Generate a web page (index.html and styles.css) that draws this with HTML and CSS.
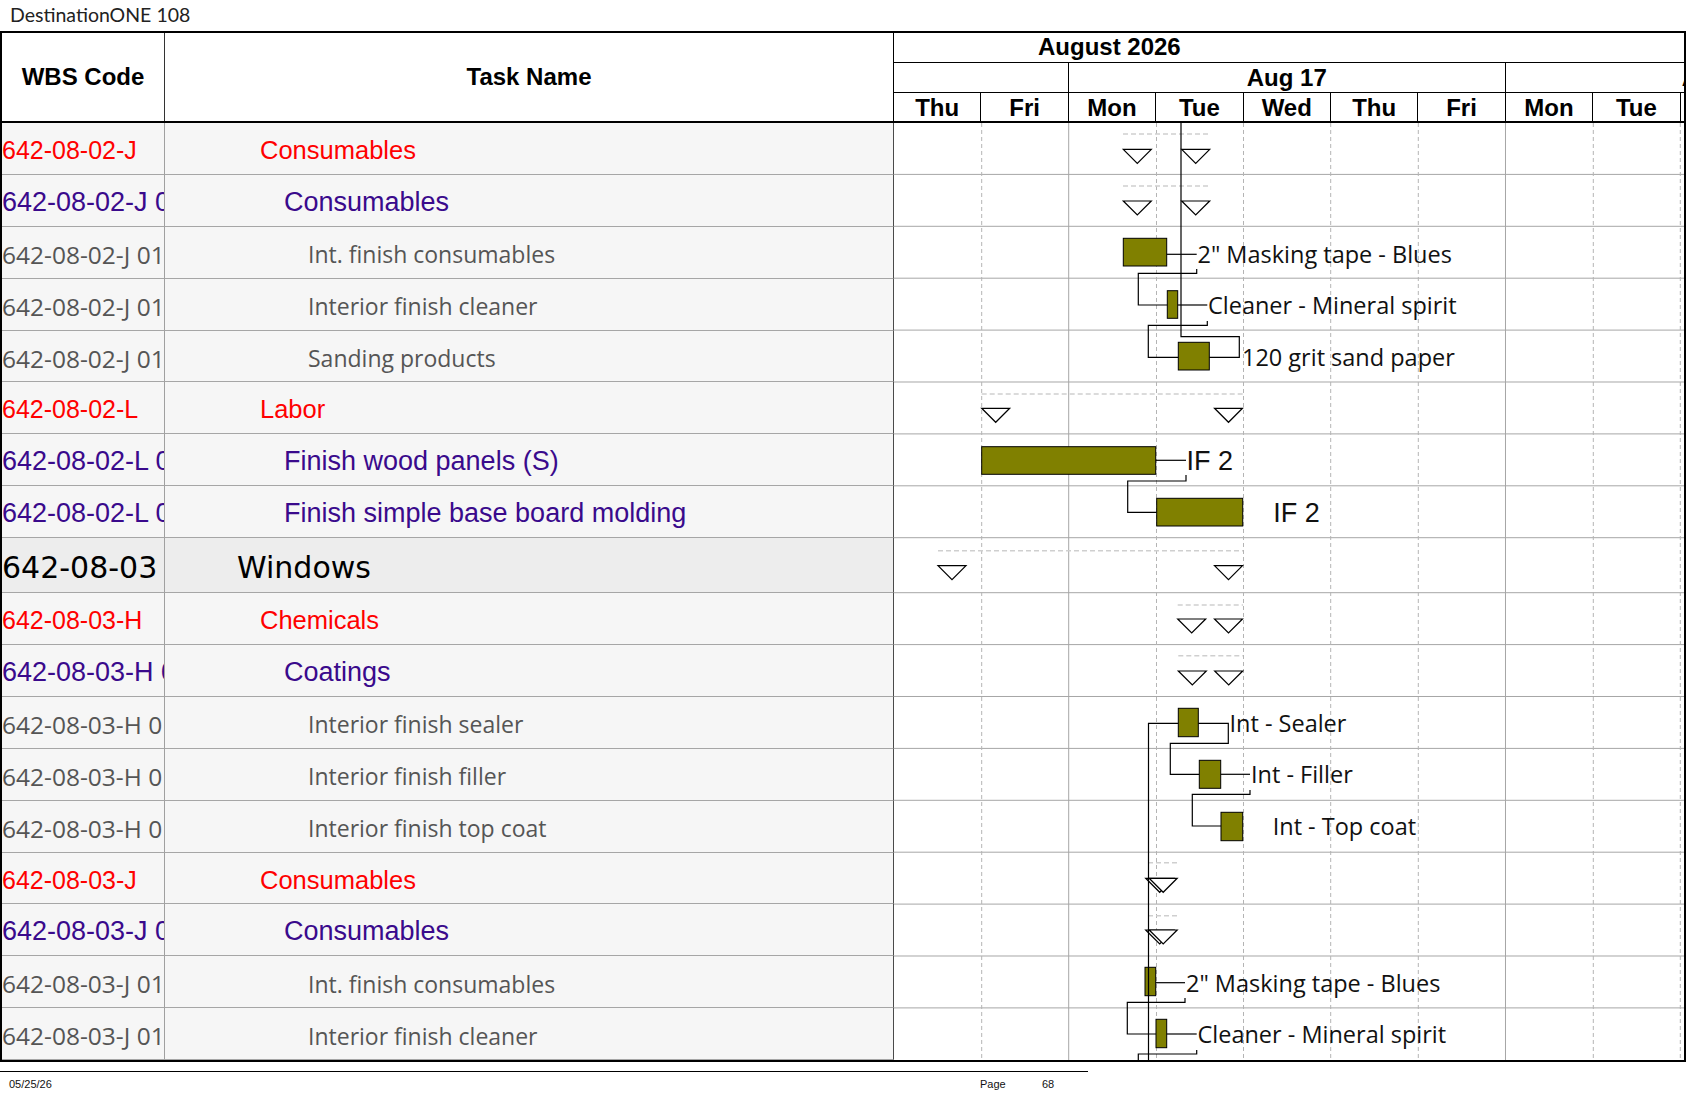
FILE: index.html
```html
<!DOCTYPE html>
<html>
<head>
<meta charset="utf-8">
<link rel="stylesheet" href="styles.css">
</head>
<body>
<div class="title">DestinationONE 108</div>
<div class="sheet">
  <div class="head">
    <div class="h-wbs">WBS Code</div>
    <div class="h-task">Task Name</div>
    <div class="h-gantt">
      <div class="h-month"><span>August 2026</span></div>
      <div class="h-weeks">
        <div class="wk"></div>
        <div class="wk">Aug 17</div>
        <div class="wk wk-cut"><span>Aug 24</span></div>
      </div>
      <div class="h-days">
        <div class="day">Thu</div>
        <div class="day">Fri</div>
        <div class="day">Mon</div>
        <div class="day">Tue</div>
        <div class="day">Wed</div>
        <div class="day">Thu</div>
        <div class="day">Fri</div>
        <div class="day">Mon</div>
        <div class="day">Tue</div>
        <div class="day day-cut"></div>
      </div>
    </div>
  </div>
  <div class="body">
    <div class="chart">
      <svg width="790" height="937.3" viewBox="0 0 790 937.3" xmlns="http://www.w3.org/2000/svg">
        <g class="rowline">
          <line x1="0" x2="790" y1="51.4" y2="51.4"/>
          <line x1="0" x2="790" y1="103.3" y2="103.3"/>
          <line x1="0" x2="790" y1="155.2" y2="155.2"/>
          <line x1="0" x2="790" y1="207.1" y2="207.1"/>
          <line x1="0" x2="790" y1="259" y2="259"/>
          <line x1="0" x2="790" y1="310.9" y2="310.9"/>
          <line x1="0" x2="790" y1="362.8" y2="362.8"/>
          <line x1="0" x2="790" y1="414.7" y2="414.7"/>
          <line x1="0" x2="790" y1="469.7" y2="469.7"/>
          <line x1="0" x2="790" y1="521.6" y2="521.6"/>
          <line x1="0" x2="790" y1="573.5" y2="573.5"/>
          <line x1="0" x2="790" y1="625.4" y2="625.4"/>
          <line x1="0" x2="790" y1="677.3" y2="677.3"/>
          <line x1="0" x2="790" y1="729.2" y2="729.2"/>
          <line x1="0" x2="790" y1="781.1" y2="781.1"/>
          <line x1="0" x2="790" y1="833" y2="833"/>
          <line x1="0" x2="790" y1="884.9" y2="884.9"/>
        </g>
        <g class="vdash">
          <line x1="87.7" x2="87.7" y1="0" y2="937.3"/>
          <line x1="262.5" x2="262.5" y1="0" y2="937.3"/>
          <line x1="349.5" x2="349.5" y1="0" y2="937.3"/>
          <line x1="436.7" x2="436.7" y1="0" y2="937.3"/>
          <line x1="524.3" x2="524.3" y1="0" y2="937.3"/>
          <line x1="699.3" x2="699.3" y1="0" y2="937.3"/>
          <line x1="786.3" x2="786.3" y1="0" y2="937.3"/>
        </g>
        <g class="vsolid">
          <line x1="174.7" x2="174.7" y1="0" y2="937.3"/>
          <line x1="611.5" x2="611.5" y1="0" y2="937.3"/>
        </g>

        <g class="sumline">
          <line x1="229" x2="317" y1="11" y2="11"/>
          <line x1="229" x2="317" y1="63" y2="63"/>
          <line x1="87.7" x2="349" y1="271" y2="271"/>
          <line x1="44" x2="349" y1="427.7" y2="427.7"/>
          <line x1="283.7" x2="349" y1="482" y2="482"/>
          <line x1="284.3" x2="349" y1="532.7" y2="532.7"/>
          <line x1="254" x2="286" y1="739.7" y2="739.7"/>
          <line x1="254" x2="286" y1="792.7" y2="792.7"/>
        </g>

        <g class="tri">
          <polygon points="229.3,26.3 257.3,26.3 243.3,40.3"/>
          <polygon points="287.7,26.3 315.7,26.3 301.7,40.3"/>
          <polygon points="229.3,78 257.3,78 243.3,92"/>
          <polygon points="287.7,78 315.7,78 301.7,92"/>
          <polygon points="87.7,285.3 115.7,285.3 101.7,299.3"/>
          <polygon points="320.5,285.3 348.5,285.3 334.5,299.3"/>
          <polygon points="44,442.7 72,442.7 58,456.7"/>
          <polygon points="320.5,442.7 348.5,442.7 334.5,456.7"/>
          <polygon points="283.7,496 311.7,496 297.7,510"/>
          <polygon points="320.5,496 348.5,496 334.5,510"/>
          <polygon points="284.3,548 312.3,548 298.3,562"/>
          <polygon points="320.7,548 348.7,548 334.7,562"/>
          <polygon points="251.7,755.3 279.7,755.3 265.7,769.3"/>
          <polygon points="255.2,755.3 283.2,755.3 269.2,769.3"/>
          <polygon points="251.7,807 279.7,807 265.7,821"/>
          <polygon points="255.2,807 283.2,807 269.2,821"/>
        </g>

        <g class="bar">
          <rect x="229.3" y="115.3" width="43.4" height="27.7"/>
          <rect x="273.3" y="167.7" width="10.4" height="27.6"/>
          <rect x="284.3" y="219.3" width="31" height="27.7"/>
          <rect x="87.7" y="323.7" width="174" height="27.6"/>
          <rect x="262.7" y="375.3" width="86" height="27.7"/>
          <rect x="284.3" y="585.3" width="20" height="28.4"/>
          <rect x="305.3" y="637.3" width="21.4" height="28"/>
          <rect x="327" y="689.3" width="21.7" height="28.4"/>
          <rect x="251" y="844.3" width="10.7" height="28.4"/>
          <rect x="262" y="896.3" width="10.7" height="28.4"/>
        </g>

        <g class="link">
          <line x1="272.7" x2="302.7" y1="131.3" y2="131.3"/>
          <polyline points="302.7,146 302.7,150.3 244.3,150.3 244.3,182 273.3,182"/>
          <line x1="283.7" x2="313.3" y1="182" y2="182"/>
          <polyline points="313.3,198 313.3,202.3 254.3,202.3 254.3,234.3 284.3,234.3"/>
          <polyline points="287,0 287,213.7 345.3,213.7 345.3,234.3 315.3,234.3"/>
          <line x1="261.7" x2="292" y1="337.3" y2="337.3"/>
          <polyline points="292,352 292,358 233.7,358 233.7,389.3 262.7,389.3"/>
          <polyline points="304.3,600.3 334.3,600.3 334.3,620.3 276.3,620.3 276.3,651.3 305.3,651.3"/>
          <polyline points="284.3,600.3 254.5,600.3 254.5,937.3"/>
          <line x1="326.7" x2="356" y1="651.3" y2="651.3"/>
          <polyline points="356,667 356,671.3 298.3,671.3 298.3,703 327,703"/>
          <line x1="261.7" x2="291" y1="859.7" y2="859.7"/>
          <polyline points="291,875 291,879.3 233.3,879.3 233.3,911 262,911"/>
          <line x1="272.7" x2="302.7" y1="911" y2="911"/>
          <polyline points="302.7,927 302.7,931 244.3,931 244.3,937.3"/>
        </g>

        <g class="lbl">
          <text x="303.5" y="140.2">2" Masking tape - Blues</text>
          <text x="314" y="190.9">Cleaner - Mineral spirit</text>
          <text x="348" y="243.2">120 grit sand paper</text>
          <text x="335.5" y="609.2">Int - Sealer</text>
          <text x="357" y="660.2">Int - Filler</text>
          <text x="378.7" y="711.9">Int - Top coat</text>
          <text x="292" y="868.6">2" Masking tape - Blues</text>
          <text x="303.5" y="919.9">Cleaner - Mineral spirit</text>
        </g>
        <g class="lbl-a">
          <text x="292.5" y="347">IF 2</text>
          <text x="379.3" y="399">IF 2</text>
        </g>
      </svg>
    </div>

    <div class="wbs l1">642-08-02-J</div><div class="task l1">Consumables</div>
    <div class="wbs l2">642-08-02-J 01</div><div class="task l2">Consumables</div>
    <div class="wbs l3">642-08-02-J 01</div><div class="task l3">Int. finish consumables</div>
    <div class="wbs l3">642-08-02-J 01</div><div class="task l3">Interior finish cleaner</div>
    <div class="wbs l3">642-08-02-J 01</div><div class="task l3">Sanding products</div>
    <div class="wbs l1">642-08-02-L</div><div class="task l1">Labor</div>
    <div class="wbs l2">642-08-02-L 01</div><div class="task l2">Finish wood panels (S)</div>
    <div class="wbs l2">642-08-02-L 02</div><div class="task l2">Finish simple base board molding</div>
    <div class="wbs l0">642-08-03</div><div class="task l0">Windows</div>
    <div class="wbs l1">642-08-03-H</div><div class="task l1">Chemicals</div>
    <div class="wbs l2">642-08-03-H 01</div><div class="task l2">Coatings</div>
    <div class="wbs l3">642-08-03-H 01</div><div class="task l3">Interior finish sealer</div>
    <div class="wbs l3">642-08-03-H 01</div><div class="task l3">Interior finish filler</div>
    <div class="wbs l3">642-08-03-H 01</div><div class="task l3">Interior finish top coat</div>
    <div class="wbs l1">642-08-03-J</div><div class="task l1">Consumables</div>
    <div class="wbs l2">642-08-03-J 01</div><div class="task l2">Consumables</div>
    <div class="wbs l3">642-08-03-J 01</div><div class="task l3">Int. finish consumables</div>
    <div class="wbs l3">642-08-03-J 01</div><div class="task l3">Interior finish cleaner</div>
  </div>
</div>
<div class="footer">
  <div class="f-date">05/25/26</div>
  <div class="f-page">Page</div>
  <div class="f-num">68</div>
</div>
</body>
</html>
```

FILE: styles.css
```css
html, body {
  margin: 0;
  padding: 0;
  background: #fff;
}
body {
  width: 1687px;
  height: 1097px;
  overflow: hidden;
}

.title {
  height: 31px;
  padding-left: 10px;
  font-family: "Lato", "DejaVu Sans", sans-serif;
  font-size: 19.5px;
  line-height: 29px;
  color: #222;
}

.sheet {
  width: 1686px;
  box-sizing: border-box;
  border: 2px solid #000;
}

/* ---------- header ---------- */
.head {
  display: grid;
  grid-template-columns: 163px 729px 790px;
  height: 90px;
  box-sizing: border-box;
  border-bottom: 2px solid #000;
  font-family: "Liberation Sans", Arial, sans-serif;
  font-weight: bold;
  font-size: 24px;
  color: #000;
}
.h-wbs, .h-task {
  display: flex;
  align-items: center;
  justify-content: center;
  border-right: 1px solid #000;
}
.h-wbs {
  border-right-color: #333;
}
.h-gantt {
  display: grid;
  grid-template-rows: 30px 30px 28px;
}
.h-month {
  border-bottom: 1px solid #000;
  padding-left: 144px;
  line-height: 28px;
  white-space: nowrap;
}
.h-weeks {
  display: grid;
  grid-template-columns: 174.8px 437px 1fr;
  border-bottom: 1px solid #000;
}
.wk {
  border-right: 1px solid #000;
  text-align: center;
  line-height: 29px;
  white-space: nowrap;
}
.wk-cut {
  border-right: none;
  text-align: left;
  overflow: hidden;
  padding-left: 176px;
}
.h-days {
  display: grid;
  grid-template-columns: repeat(9, 87.4px) 1fr;
}
.day {
  border-right: 1px solid #000;
  text-align: center;
  line-height: 30px;
}
.day-cut {
  border-right: none;
}

/* ---------- body ---------- */
.body {
  display: grid;
  grid-template-columns: 163px 729px 790px;
  grid-template-rows: repeat(8, 51.9px) 55px repeat(9, 51.9px);
}
.chart {
  grid-column: 3;
  grid-row: 1 / span 18;
  overflow: hidden;
  background: #fff;
}
.chart svg {
  display: block;
}

.wbs, .task {
  box-sizing: border-box;
  background: #f6f6f6;
  border-bottom: 1px solid #a6a6a6;
  white-space: nowrap;
  overflow: hidden;
  display: flex;
  align-items: center;
  padding-top: 4px;
}
.wbs {
  border-right: 1px solid #a0a0a0;
}
.task {
  border-right: 1px solid #4a4a4a;
}

.l1 {
  font-family: "Liberation Sans", Arial, sans-serif;
  color: #ff0000;
  font-size: 25.5px;
}
.wbs.l1 {
  font-size: 25px;
}
.task.l1 {
  padding-left: 95px;
}
.l2 {
  font-family: "Liberation Sans", Arial, sans-serif;
  color: #3a0a8c;
  font-size: 27px;
}
.task.l2 {
  padding-left: 119px;
}
.l3 {
  font-family: "Open Sans", "Noto Sans", sans-serif;
  color: #555;
  font-size: 23px;
}
.wbs.l3 {
  font-size: 24.5px;
}
.task.l3 {
  padding-left: 143px;
}
.l0 {
  font-family: "DejaVu Sans", sans-serif;
  color: #000;
  font-size: 30px;
  background: #ededed;
}
.task.l0 {
  padding-left: 72px;
}

/* ---------- chart svg ---------- */
.rowline line {
  stroke: #a6a6a6;
  stroke-width: 1;
}
.vdash line {
  stroke: #b4b4b4;
  stroke-width: 1;
  stroke-dasharray: 4 3;
}
.vsolid line {
  stroke: #a6a6a6;
  stroke-width: 1;
}
.sumline line {
  stroke: #cfcfcf;
  stroke-width: 1.5;
  stroke-dasharray: 5 3;
}
.tri polygon {
  fill: #fff;
  stroke: #000;
  stroke-width: 1.2;
}
.bar rect {
  fill: #808000;
  stroke: #000;
  stroke-width: 1;
}
.link line, .link polyline {
  fill: none;
  stroke: #000;
  stroke-width: 1.2;
}
.lbl text {
  font-family: "Open Sans", "Noto Sans", sans-serif;
  font-size: 23.5px;
  fill: #111;
}
.lbl-a text {
  font-family: "Liberation Sans", Arial, sans-serif;
  font-size: 27px;
  fill: #111;
}

/* ---------- footer ---------- */
.footer {
  margin-top: 9px;
  width: 1088px;
  border-top: 1px solid #000;
  display: grid;
  grid-template-columns: 980px 62px 1fr;
  font-family: "Liberation Sans", Arial, sans-serif;
  font-size: 11px;
  line-height: 24px;
  color: #111;
}
.f-date {
  padding-left: 9px;
}
```
